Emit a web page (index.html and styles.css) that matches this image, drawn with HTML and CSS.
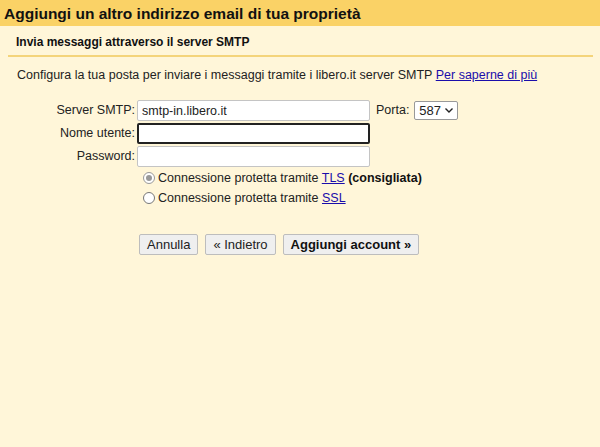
FILE: index.html
```html
<!DOCTYPE html>
<html lang="it">
<head>
<meta charset="utf-8">
<title>Aggiungi un altro indirizzo email</title>
<link rel="stylesheet" href="styles.css">
</head>
<body>
<div class="header">Aggiungi un altro indirizzo email di tua proprietà</div>
<div class="content">
  <div class="subhead">Invia messaggi attraverso il server SMTP</div>
  <p class="desc">Configura la tua posta per inviare i messaggi tramite i libero.it server SMTP <a href="#">Per saperne di più</a></p>
  <div class="form">
    <div class="row">
      <label class="lbl">Server SMTP:</label>
      <input class="field" type="text" value="smtp-in.libero.it">
      <span class="porta">Porta:</span>
      <span class="select">587 <svg width="10" height="7" viewBox="0 0 10 7"><path d="M1.5 1.5 L5 5 L8.5 1.5" fill="none" stroke="#222" stroke-width="1.4"/></svg></span>
    </div>
    <div class="row">
      <label class="lbl">Nome utente:</label>
      <input class="field focus" type="text" value="">
    </div>
    <div class="row">
      <label class="lbl">Password:</label>
      <input class="field" type="password" value="">
    </div>
    <div class="radios">
      <div class="radio-row"><span class="radio checked"></span><span class="rtext">Connessione protetta tramite <a href="#">TLS</a> <b>(consigliata)</b></span></div>
      <div class="radio-row"><span class="radio"></span><span class="rtext">Connessione protetta tramite <a href="#">SSL</a></span></div>
    </div>
    <div class="buttons">
      <button class="btn">Annulla</button>
      <button class="btn">« Indietro</button>
      <button class="btn bold">Aggiungi account »</button>
    </div>
  </div>
</div>
</body>
</html>
```
FILE: styles.css
```css
html, body {
  margin: 0;
  padding: 0;
  background: #fff6d9;
  font-family: "Liberation Sans", Arial, sans-serif;
  color: #222;
}
.header {
  background: #fad266;
  height: 26px;
  line-height: 27px;
  padding-left: 4px;
  font-size: 15.5px;
  font-weight: bold;
  color: #111;
}
.content {
  padding: 0 7px 0 8px;
}
.subhead {
  font-size: 12px;
  font-weight: bold;
  color: #111;
  padding: 9px 8px 0;
  height: 20px;
  border-bottom: 2px solid #f4d47a;
}
.desc {
  margin: 0;
  padding: 10px 0 0 9px;
  font-size: 12.5px;
  line-height: 16px;
  color: #222;
}
a { color: #1a0dab; text-decoration: underline; }
.form {
  margin-top: 16px;
}
.row {
  display: flex;
  align-items: center;
  height: 22px;
  margin-bottom: 1px;
}
.lbl {
  width: 127px;
  text-align: right;
  font-size: 12.5px;
  color: #222;
  padding-right: 2px;
}
.field {
  box-sizing: border-box;
  width: 233px;
  height: 21px;
  margin: 0;
  padding: 1px 4px 0;
  border: 1px solid #c4c4c4;
  border-radius: 2px;
  background: #fff;
  font-family: "Liberation Sans", Arial, sans-serif;
  font-size: 12.5px;
  color: #222;
  outline: none;
}
.field.focus {
  border: 2px solid #222;
}
.porta {
  font-size: 12.5px;
  margin-left: 6px;
  margin-right: 5px;
}
.select {
  box-sizing: border-box;
  display: inline-flex;
  align-items: center;
  gap: 3px;
  height: 19px;
  padding: 0 3px 0 4px;
  border: 1px solid #999;
  border-radius: 2px;
  background: #fff;
  font-size: 13px;
}
.radios {
  margin-top: 1px;
  padding-left: 135px;
  font-size: 12.5px;
}
.radio-row {
  display: flex;
  align-items: center;
  height: 20px;
}
.radio-row b { font-weight: bold; color: #111; }
.radio {
  box-sizing: border-box;
  flex: none;
  width: 12px;
  height: 12px;
  border: 1px solid #777;
  border-radius: 50%;
  background: #fff;
  margin-right: 3px;
  position: relative;
}
.radio.checked {
  border-color: #999;
  background: #fff;
}
.radio.checked::after {
  content: "";
  position: absolute;
  left: 2px;
  top: 2px;
  width: 6px;
  height: 6px;
  border-radius: 50%;
  background: #999;
}
.buttons {
  margin-top: 26px;
  padding-left: 131px;
  display: flex;
  gap: 7px;
}
.btn {
  box-sizing: border-box;
  height: 21px;
  padding: 0 7px;
  border: 1px solid #bdbdbd;
  border-radius: 2px;
  background: #efefef;
  font-family: "Liberation Sans", Arial, sans-serif;
  font-size: 13px;
  color: #222;
}
.btn + .btn { margin-left: 0; }
.btn.bold { font-weight: bold; color: #111; }
```
